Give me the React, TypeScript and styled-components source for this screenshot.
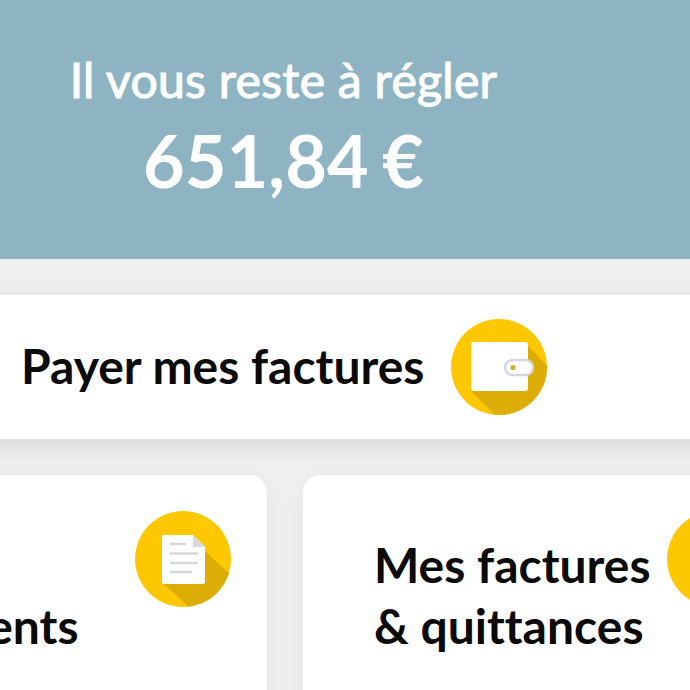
import React from "react";
import styled, { createGlobalStyle } from "styled-components";

const Global = createGlobalStyle`
  html, body { margin: 0; padding: 0; background: #efefef; }
  body { font-family: Lato, "Open Sans", sans-serif; font-variant-ligatures: none; }
`;

const Page = styled.div`
  width: 690px;
  height: 690px;
  overflow: hidden;
  background: #efefef;
`;

const Hero = styled.header`
  height: 259px;
  background: #8eb4c4;
  color: #fff;
  box-sizing: border-box;
  padding-top: 48px;
  width: 100%;
`;

const HeroInner = styled.div`
  width: 567px;
  text-align: center;
`;

const HeroLabel = styled.div`
  font-size: 48px;
  line-height: 64px;
  font-weight: 400;
  letter-spacing: 0.3px;
  -webkit-text-stroke: 1.1px #fff;
`;

const HeroAmount = styled.div`
  font-size: 72px;
  line-height: 90px;
  font-weight: 700;
  word-spacing: -4px;
  margin-top: 3px;
`;

const PayCard = styled.section`
  margin: 36px -40px 0 -40px;
  height: 144px;
  background: #fff;
  border-radius: 18px;
  box-shadow: 0 6px 24px rgba(0, 0, 0, 0.1);
  display: flex;
  align-items: center;
  gap: 27px;
  padding-left: 61px;
`;

const CardTitle = styled.div`
  font-size: 48px;
  line-height: 61px;
  font-weight: 700;
  color: #0a0a0a;
  white-space: nowrap;
  margin-bottom: 3px;
`;

const Row = styled.div`
  margin: 36px 0 0 -229px;
  display: grid;
  grid-template-columns: 496px 496px;
  gap: 36px;
`;

const Card = styled.section`
  height: 300px;
  background: #fff;
  border-radius: 18px;
  box-shadow: 0 6px 24px rgba(0, 0, 0, 0.05);
  display: flex;
  align-items: flex-start;
  justify-content: space-between;
  padding: 36px 36px 0 71px;
  box-sizing: border-box;
`;

const CardText = styled(CardTitle)`
  padding-top: 23px;
  margin-bottom: 0;
`;

const Disc = styled.svg`
  width: 96px;
  height: 96px;
  flex: none;
  display: block;
`;

const WalletIcon = () => (
  <Disc viewBox="0 0 96 96">
    <defs>
      <clipPath id="w"><circle cx="48" cy="48" r="48" /></clipPath>
    </defs>
    <circle cx="48" cy="48" r="48" fill="#fec800" />
    <g clipPath="url(#w)">
      <path d="M20 72 L50 102 L100 102 L100 51 L77 27 Z" fill="#dbad06" />
    </g>
    <rect x="20" y="23" width="57" height="49" rx="3" fill="#fff" />
    <rect x="54" y="41" width="28" height="15" rx="7.5" fill="#fff" stroke="#d5d7dc" strokeWidth="2.4" />
    <circle cx="62" cy="48.5" r="2.6" fill="#d3ab2a" />
  </Disc>
);

const DocIcon = () => (
  <Disc viewBox="0 0 96 96">
    <defs>
      <clipPath id="d"><circle cx="48" cy="48" r="48" /></clipPath>
    </defs>
    <circle cx="48" cy="48" r="48" fill="#fec800" />
    <g clipPath="url(#d)">
      <path d="M28 72 L60 102 L100 102 L100 68 L70 40 Z" fill="#dbad06" />
    </g>
    <path d="M27 24 H58 L70 36 V71 a2 2 0 0 1 -2 2 H29 a2 2 0 0 1 -2 -2 Z" fill="#fff" />
    <path d="M58 24 L70 36 H58 Z" fill="#d8dade" />
    <path d="M35 33 H51 M35 42.5 H63 M35 52 H63 M35 61 H57" stroke="#d5d7da" strokeWidth="2.4" fill="none" />
  </Disc>
);

const BlankIcon = () => (
  <Disc viewBox="0 0 96 96">
    <circle cx="48" cy="48" r="48" fill="#fec800" />
  </Disc>
);

export default function App() {
  return (
    <Page>
      <Global />
      <Hero>
        <HeroInner>
          <HeroLabel>Il vous reste à régler</HeroLabel>
          <HeroAmount>651,84 €</HeroAmount>
        </HeroInner>
      </Hero>
      <PayCard>
        <CardTitle>Payer mes factures</CardTitle>
        <WalletIcon />
      </PayCard>
      <Row>
        <Card>
          <CardText>Mes<br />documents</CardText>
          <DocIcon />
        </Card>
        <Card>
          <CardText>Mes factures<br />&amp; quittances</CardText>
          <BlankIcon />
        </Card>
      </Row>
    </Page>
  );
}
